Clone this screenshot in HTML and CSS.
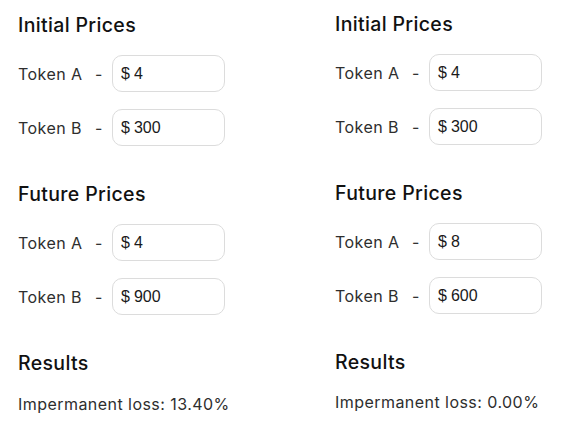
FILE: index.html
```html
<!DOCTYPE html>
<html>
<head>
<meta charset="utf-8">
<link rel="stylesheet" href="styles.css">
</head>
<body>
<div class="page">
  <div class="col col-left">
    <h2 class="title">Initial Prices</h2>
    <div class="row"><span class="label">Token A</span><span class="dash">-</span><div class="field"><span class="cur">$</span><input class="val" value="4"></div></div>
    <div class="row"><span class="label">Token B</span><span class="dash">-</span><div class="field"><span class="cur">$</span><input class="val" value="300"></div></div>
    <h2 class="title sec">Future Prices</h2>
    <div class="row"><span class="label">Token A</span><span class="dash">-</span><div class="field"><span class="cur">$</span><input class="val" value="4"></div></div>
    <div class="row"><span class="label">Token B</span><span class="dash">-</span><div class="field"><span class="cur">$</span><input class="val" value="900"></div></div>
    <h2 class="title sec">Results</h2>
    <p class="result">Impermanent loss: 13.40%</p>
  </div>
  <div class="col col-right">
    <h2 class="title">Initial Prices</h2>
    <div class="row"><span class="label">Token A</span><span class="dash">-</span><div class="field"><span class="cur">$</span><input class="val" value="4"></div></div>
    <div class="row"><span class="label">Token B</span><span class="dash">-</span><div class="field"><span class="cur">$</span><input class="val" value="300"></div></div>
    <h2 class="title sec">Future Prices</h2>
    <div class="row"><span class="label">Token A</span><span class="dash">-</span><div class="field"><span class="cur">$</span><input class="val" value="8"></div></div>
    <div class="row"><span class="label">Token B</span><span class="dash">-</span><div class="field"><span class="cur">$</span><input class="val" value="600"></div></div>
    <h2 class="title sec">Results</h2>
    <p class="result result-tight">Impermanent loss: 0.00%</p>
  </div>
</div>
</body>
</html>
```
FILE: styles.css
```css
html, body {
  margin: 0;
  padding: 0;
  background: #ffffff;
}
body {
  font-family: "Inter", "Open Sans", sans-serif;
  color: #222222;
}
.page {
  display: flex;
}
.col {
  display: flex;
  flex-direction: column;
  box-sizing: border-box;
}
.col-left {
  flex: 0 0 317px;
  padding: 13px 0 0 18px;
}
.col-right {
  flex: 1 1 auto;
  padding: 12px 0 0 18px;
}
.title {
  margin: 0 0 18px 0;
  font-size: 19.5px;
  line-height: 24px;
  font-weight: 500;
  color: #111111;
  letter-spacing: 0.35px;
}
.title.sec {
  margin-top: 19px;
}
.row {
  display: flex;
  align-items: center;
  height: 37px;
  margin-bottom: 17px;
}
.label {
  width: 77px;
  font-size: 16px;
  color: #2e2e2e;
  letter-spacing: 0.45px;
}
.dash {
  width: 17px;
  font-size: 16px;
  color: #333333;
}
.field {
  display: flex;
  align-items: center;
  width: 113px;
  height: 37px;
  box-sizing: border-box;
  border: 1px solid #dcdcdc;
  border-radius: 10px;
  padding-left: 8px;
  font-family: "Liberation Sans", Arial, sans-serif;
  font-size: 16px;
  color: #1a1a1a;
}
.cur {
  margin-right: 4px;
}
.val {
  border: none;
  outline: none;
  padding: 0;
  width: 70px;
  font-family: "Liberation Sans", Arial, sans-serif;
  font-size: 16px;
  color: #1a1a1a;
  background: transparent;
}
.result {
  margin: -1px 0 0 0;
  font-size: 16px;
  line-height: 24px;
  color: #2e2e2e;
  letter-spacing: 0.45px;
}
.result-tight {
  margin-top: -2px;
}
```
